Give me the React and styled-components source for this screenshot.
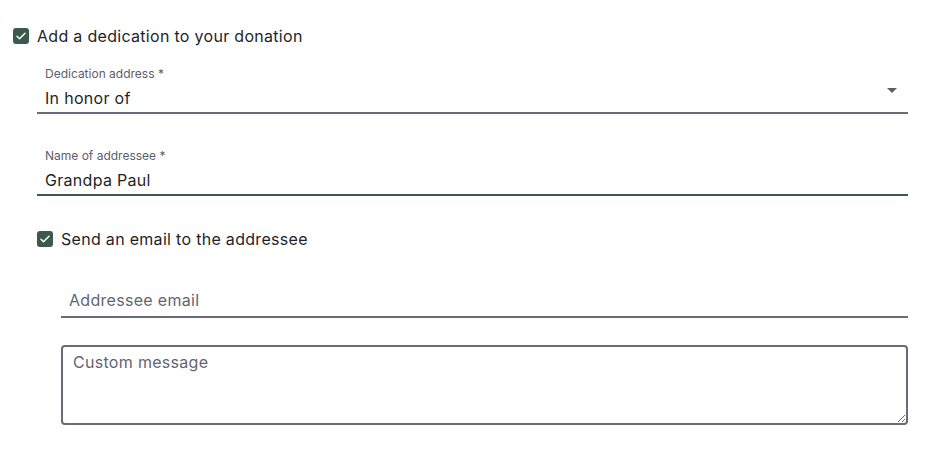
import React, { useState } from "react";
import styled, { createGlobalStyle } from "styled-components";

const GlobalStyle = createGlobalStyle`
  body {
    margin: 0;
    background: #ffffff;
    font-family: Inter, "Noto Sans", sans-serif;
    color: #1e1f28;
  }
`;

const green = "#3b5a4c";
const gray = "#6a6b78";

const Form = styled.form`
  padding: 24px 19px 0 13px;
  display: flex;
  flex-direction: column;
`;

const CheckRow = styled.label`
  display: flex;
  align-items: center;
  gap: 8px;
  height: 24px;
  font-size: 16px;
  letter-spacing: 0.3px;
  cursor: pointer;
  margin-top: ${(p) => p.$top || 0}px;
`;

const Box = styled.span`
  width: 16px;
  height: 16px;
  border-radius: 3px;
  background: ${(p) => (p.$checked ? green : "#fff")};
  border: ${(p) => (p.$checked ? "none" : `2px solid ${gray}`)};
  display: flex;
  align-items: center;
  justify-content: center;
  flex-shrink: 0;
`;

const Indent = styled.div`
  margin-left: 24px;
  display: flex;
  flex-direction: column;
`;

const Field = styled.div`
  position: relative;
  padding: 12px 8px ${(p) => p.$bottom ?? 2}px 8px;
  border-bottom: 2px solid ${(p) => (p.$focus ? green : gray)};
  margin-top: ${(p) => p.$top || 0}px;
`;

const FieldLabel = styled.div`
  font-size: 12px;
  line-height: 16px;
  margin-bottom: 4px;
  color: #5d5e6c;
`;

const Value = styled.div`
  font-size: 16px;
  line-height: 24px;
  letter-spacing: 0.3px;
  color: #1e1f28;
`;

const Input = styled.input`
  border: none;
  outline: none;
  padding: 0;
  width: 100%;
  font: inherit;
  font-size: 16px;
  line-height: 24px;
  letter-spacing: 0.3px;
  height: 24px;
  color: #1e1f28;
  background: transparent;
  &::placeholder {
    color: #646574;
  }
`;

const Arrow = styled.span`
  position: absolute;
  right: 11px;
  top: 34px;
  width: 0;
  height: 0;
  border-left: 5px solid transparent;
  border-right: 5px solid transparent;
  border-top: 5px solid #5d5e6c;
`;

const TextArea = styled.textarea`
  margin-top: 27px;
  height: 80px;
  box-sizing: border-box;
  border: 2px solid ${gray};
  border-radius: 4px;
  padding: 5px 10px;
  font: inherit;
  font-size: 16px;
  line-height: 20px;
  letter-spacing: 0.3px;
  color: #1e1f28;
  resize: vertical;
  outline: none;
  &::placeholder {
    color: #646574;
  }
`;

const Check = () => (
  <svg width="12" height="12" viewBox="0 0 24 24" fill="none">
    <path d="M4 12.5l5 5L20 6.5" stroke="#fff" strokeWidth="3" strokeLinecap="round" strokeLinejoin="round" />
  </svg>
);

export default function App() {
  const [dedicate, setDedicate] = useState(true);
  const [sendEmail, setSendEmail] = useState(true);

  return (
    <>
      <GlobalStyle />
      <Form onSubmit={(e) => e.preventDefault()}>
        <CheckRow onClick={() => setDedicate(!dedicate)}>
          <Box $checked={dedicate}>{dedicate && <Check />}</Box>
          Add a dedication to your donation
        </CheckRow>
        {dedicate && (
          <Indent>
            <Field $top={6}>
              <FieldLabel>Dedication address *</FieldLabel>
              <Value>In honor of</Value>
              <Arrow />
            </Field>
            <Field $top={22} $focus>
              <FieldLabel>Name of addressee *</FieldLabel>
              <Input defaultValue="Grandpa Paul" />
            </Field>
            <CheckRow $top={31} onClick={() => setSendEmail(!sendEmail)}>
              <Box $checked={sendEmail}>{sendEmail && <Check />}</Box>
              Send an email to the addressee
            </CheckRow>
            {sendEmail && (
              <Indent>
                <Field $top={25} $bottom={4}>
                  <Input placeholder="Addressee email" />
                </Field>
                <TextArea placeholder="Custom message" />
              </Indent>
            )}
          </Indent>
        )}
      </Form>
    </>
  );
}
